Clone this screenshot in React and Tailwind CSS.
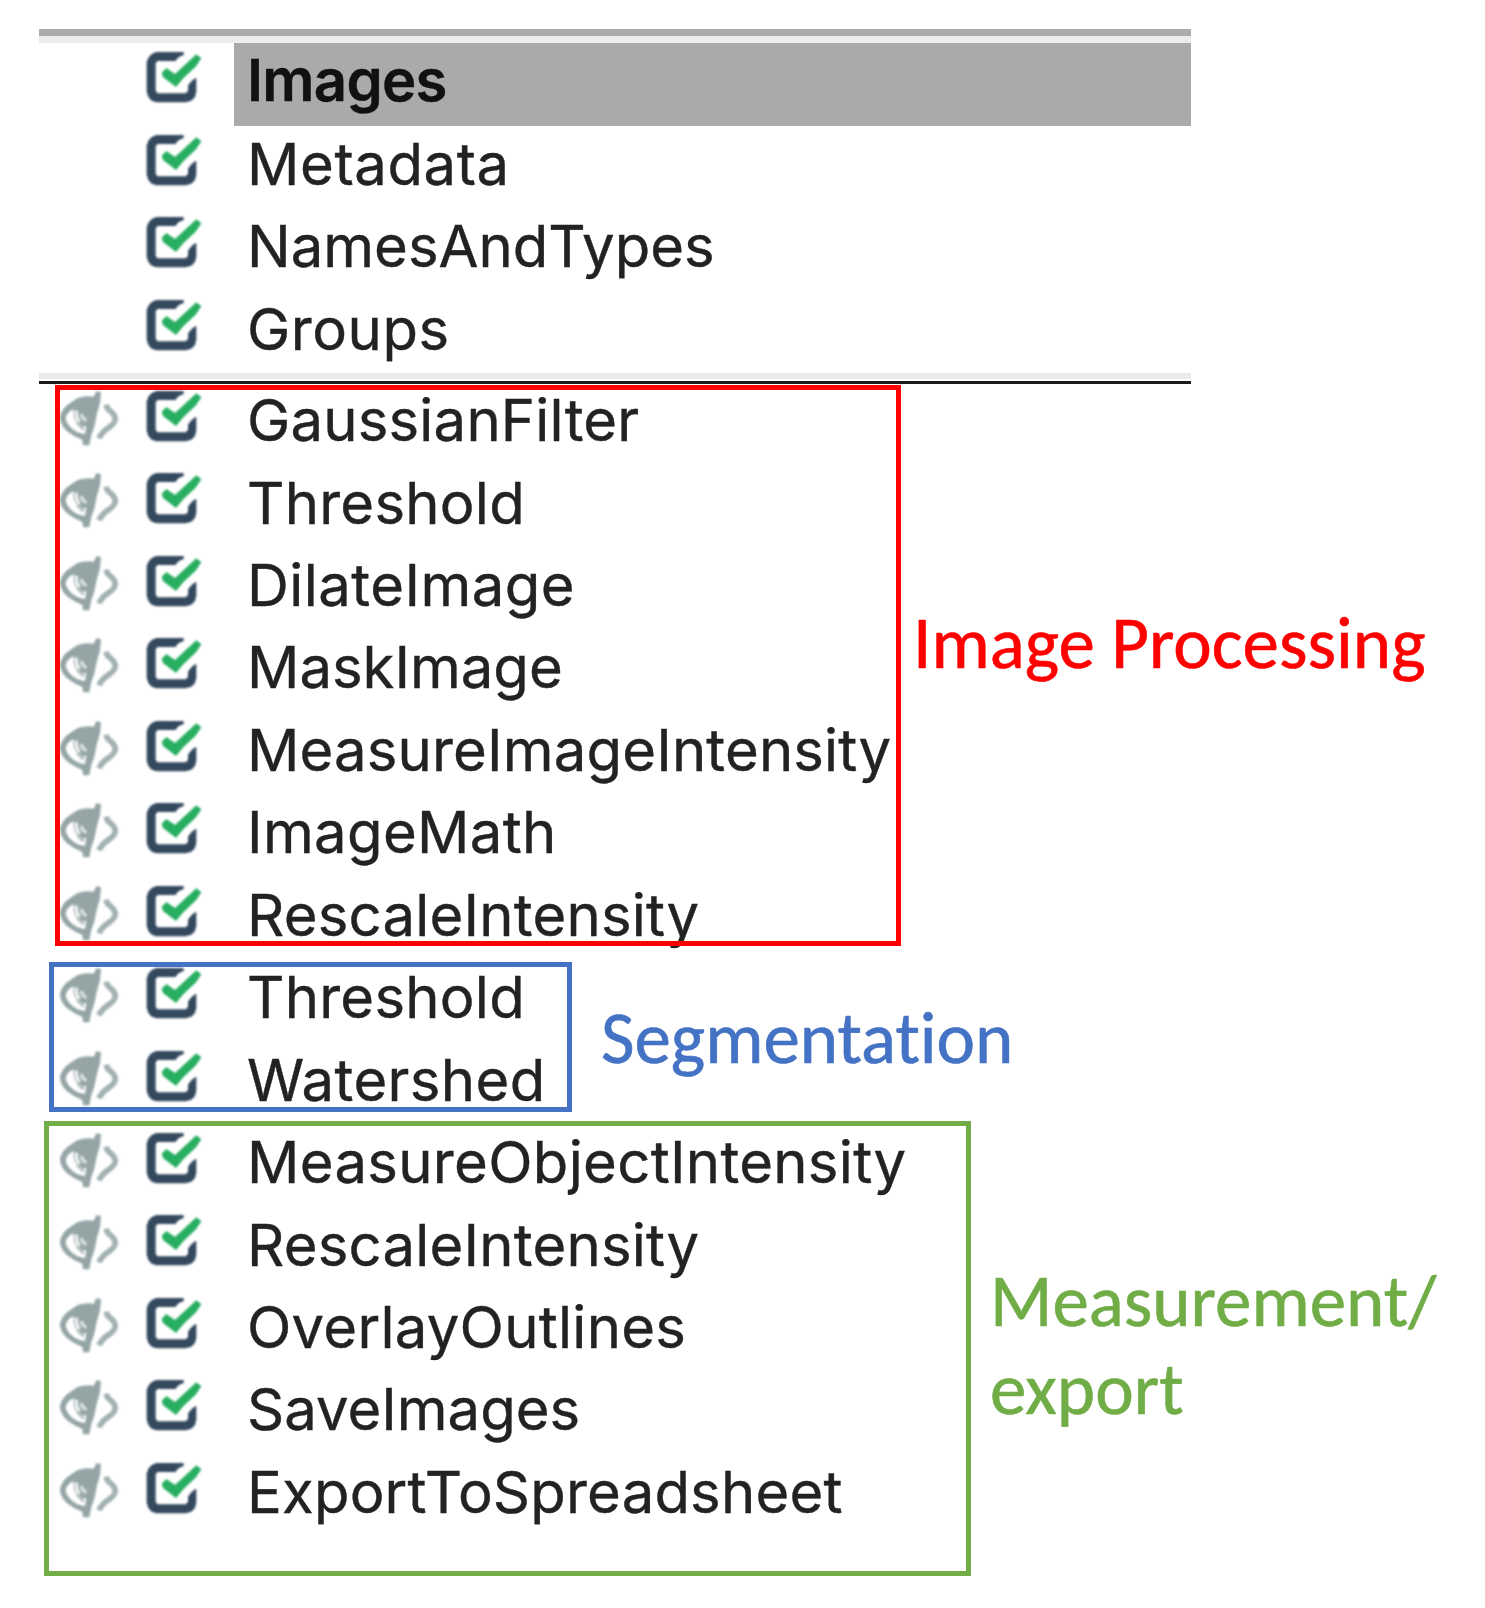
const inputModules = [
  { name: "Images", tracking: "tracking-[-0.72px]", selected: true },
  { name: "Metadata", tracking: "tracking-[0.6px]" },
  { name: "NamesAndTypes", tracking: "tracking-[0px]" },
  { name: "Groups", tracking: "tracking-[0.55px]" },
];

const processingModules = [
  { name: "GaussianFilter", tracking: "tracking-[0.2px]" },
  { name: "Threshold", tracking: "tracking-[0.25px]" },
  { name: "DilateImage", tracking: "tracking-[0.45px]" },
  { name: "MaskImage", tracking: "tracking-[0px]" },
  { name: "MeasureImageIntensity", tracking: "tracking-[0.16px]" },
  { name: "ImageMath", tracking: "tracking-[0.35px]" },
  { name: "RescaleIntensity", tracking: "tracking-[0.22px]" },
];

const segmentationModules = [
  { name: "Threshold", tracking: "tracking-[0.25px]" },
  { name: "Watershed", tracking: "tracking-[0.4px]" },
];

const measurementModules = [
  { name: "MeasureObjectIntensity", tracking: "tracking-[0.32px]" },
  { name: "RescaleIntensity", tracking: "tracking-[0.22px]" },
  { name: "OverlayOutlines", tracking: "tracking-[0.27px]" },
  { name: "SaveImages", tracking: "tracking-[0px]" },
  { name: "ExportToSpreadsheet", tracking: "tracking-[0.2px]" },
];

function EyeClosedIcon() {
  return (
    <svg viewBox="0 0 180 171" className="h-[57px] w-[60px] blur-[1px]" aria-hidden="true">
      <path
        fill="#95a5a6"
        fillRule="evenodd"
        d="M112 4 L126 6 L123 40 L113 75 L106 110 L97 135 L91 166 H72 L70 150 Q44 140 24 124 Q4 104 3 84 Q4 64 24 46 Q40 34 56 24 Q80 16 104 20Z M20 84 Q24 66 44 58 Q42 76 48 90 Q58 104 68 108 Q76 112 82 106 L78 132 Q54 130 38 115 Q22 100 20 84Z"
      />
      <path d="M52 62 Q50 84 62 96" fill="none" stroke="#f2f4f4" strokeWidth="10" />
      <path d="M66 72 Q70 86 82 92" fill="none" stroke="#dfe4e4" strokeWidth="9" />
      <path d="M54 98 L74 118" fill="none" stroke="#b5c0c1" strokeWidth="9" />
      <path
        d="M142 44 Q144 58 154 63 Q168 74 169 86 Q168 100 152 111 Q128 126 120 145"
        fill="none"
        stroke="#a3b1b2"
        strokeWidth="17"
      />
    </svg>
  );
}

function CheckboxIcon() {
  return (
    <svg viewBox="0 0 171 171" className="h-[57px] w-[57px] blur-[1px]" aria-hidden="true">
      <path
        fill="#34495e"
        d="M116 3 H34 L20 9 L10 20 L5 34 V122 L10 138 L20 149 L34 154 H122 L139 149 L150 138 L154 122 V80 Q140 86 129 104 V120 L122 127 H38 L32 120 V36 L38 30 H92 Q98 17 116 13Z"
      />
      <path fill="#27ae60" d="M50 65 L64 51 L90 69 L154 10 L169 22 L153 46 L115 82 L93 108 L54 78Z" />
    </svg>
  );
}

function ModuleRow({ name, tracking, selected, hasEye }) {
  return (
    <li className="flex min-h-0 flex-1">
      <span className="mt-2 ml-5 w-[60px] shrink-0">{hasEye && <EyeClosedIcon />}</span>
      <span className="mt-2 ml-[26px] w-[57px] shrink-0">
        <CheckboxIcon />
      </span>
      <span
        className={
          "ml-8 flex flex-1 items-center pl-[13px] text-[58px] leading-none whitespace-nowrap " +
          tracking +
          (selected
            ? " bg-[#aaaaaa] pb-[9px] font-semibold text-[#111111] [-webkit-text-stroke:0.4px_#111111]"
            : " pb-[6px] text-[#222222] [-webkit-text-stroke:0.4px_#222222]")
        }
      >
        {name}
      </span>
    </li>
  );
}

function ModuleList({ modules, hasEye, className }) {
  return (
    <ul className={"flex shrink-0 flex-col " + className}>
      {modules.map((m) => (
        <ModuleRow key={m.name} {...m} hasEye={hasEye} />
      ))}
    </ul>
  );
}

function Group({ modules, className, listClass, boxClass, labelClass, children }) {
  return (
    <section className={"relative flex " + className}>
      <ModuleList modules={modules} hasEye className={listClass} />
      <h2
        className={
          "font-[Carlito,Lato,sans-serif] text-[73px] leading-[88px] whitespace-nowrap [font-variant-ligatures:none] [-webkit-text-stroke:0.6px_currentColor] " +
          labelClass
        }
      >
        {children}
      </h2>
      <div className={"pointer-events-none absolute border-[5px] " + boxClass} />
    </section>
  );
}

export default function App() {
  return (
    <main className="h-[1608px] w-[1485px] overflow-hidden bg-white pt-[29px] pl-[39px] font-[Inter,sans-serif]">
      <div className="h-[7px] w-[1152px] bg-[#acacac]" />
      <div className="h-[7px] w-[1152px] bg-[#ededed]" />
      <ModuleList modules={inputModules} className="h-[330px] w-[1152px]" />
      <div className="h-[6px] w-[1152px] bg-[#ebebeb]" />
      <div className="mt-[2px] h-[3px] w-[1152px] bg-[#1c1c1e]" />

      <div className="-mt-[2px] flex flex-col">
        <Group
          modules={processingModules}
          className="h-[577px]"
          listClass="w-[874px]"
          boxClass="top-[3px] left-4 h-[561px] w-[846px] border-[#ff0000]"
          labelClass="mt-[217px] text-[#ff0000]"
        >
          Image Processing
        </Group>
        <Group
          modules={segmentationModules}
          className="h-[165px]"
          listClass="w-[562px]"
          boxClass="top-[3px] left-[10px] h-[150px] w-[523px] border-[#4472c4]"
          labelClass="mt-[35px] text-[#4472c4]"
        >
          Segmentation
        </Group>
        <Group
          modules={measurementModules}
          className="h-[412px]"
          listClass="w-[951px]"
          boxClass="-top-[3px] left-[5px] h-[455px] w-[927px] border-[#70ad47]"
          labelClass="mt-[133px] text-[#70ad47]"
        >
          Measurement/
          <br />
          export
        </Group>
      </div>
    </main>
  );
}
